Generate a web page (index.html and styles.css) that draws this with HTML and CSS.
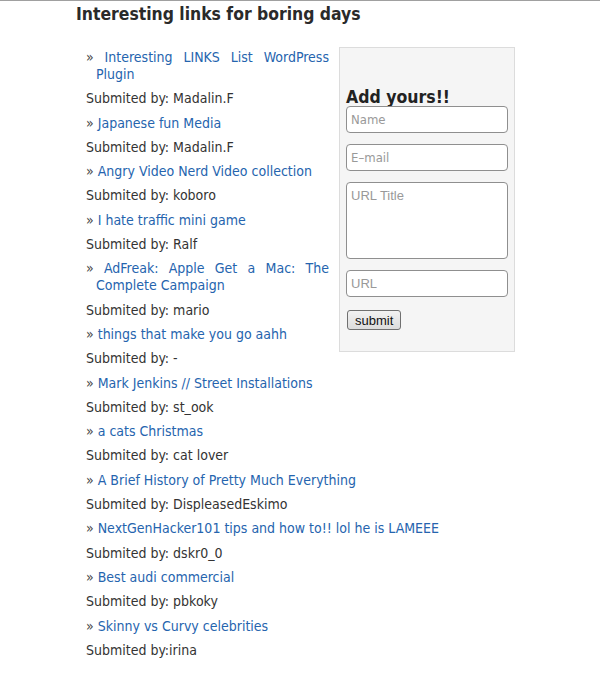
FILE: index.html
```html
<!DOCTYPE html>
<html>
<head>
<meta charset="utf-8">
<link rel="stylesheet" href="styles.css">
</head>
<body>
<div class="page">
  <h1 class="title">Interesting links for boring days</h1>
  <div class="content">
    <form class="addbox">
      <h2 class="add-title">Add yours!!</h2>
      <input class="field" type="text" placeholder="Name">
      <input class="field" type="text" placeholder="E–mail">
      <textarea class="field area" placeholder="URL Title"></textarea>
      <input class="field url" type="text" placeholder="URL">
      <button class="submit" type="button">submit</button>
    </form>
    <p class="link">» <a href="#">Interesting LINKS List WordPress Plugin</a></p>
    <p class="by">Submited by: Madalin.F</p>
    <p class="link">» <a href="#">Japanese fun Media</a></p>
    <p class="by">Submited by: Madalin.F</p>
    <p class="link">» <a href="#">Angry Video Nerd Video collection</a></p>
    <p class="by">Submited by: koboro</p>
    <p class="link">» <a href="#">I hate traffic mini game</a></p>
    <p class="by">Submited by: Ralf</p>
    <p class="link">» <a href="#">AdFreak: Apple Get a Mac: The Complete Campaign</a></p>
    <p class="by">Submited by: mario</p>
    <p class="link">» <a href="#">things that make you go aahh</a></p>
    <p class="by">Submited by: -</p>
    <p class="link">» <a href="#">Mark Jenkins // Street Installations</a></p>
    <p class="by">Submited by: st_ook</p>
    <p class="link">» <a href="#">a cats Christmas</a></p>
    <p class="by">Submited by: cat lover</p>
    <p class="link">» <a href="#">A Brief History of Pretty Much Everything</a></p>
    <p class="by">Submited by: DispleasedEskimo</p>
    <p class="link">» <a href="#">NextGenHacker101 tips and how to!! lol he is LAMEEE</a></p>
    <p class="by">Submited by: dskr0_0</p>
    <p class="link">» <a href="#">Best audi commercial</a></p>
    <p class="by">Submited by: pbkoky</p>
    <p class="link">» <a href="#">Skinny vs Curvy celebrities</a></p>
    <p class="by">Submited by:irina</p>
  </div>
</div>
</body>
</html>
```
FILE: styles.css
```css
html, body {
  margin: 0;
  padding: 0;
  background: #fff;
}
body {
  border-top: 1px solid #a0a0a0;
  font-family: "DejaVu Sans Condensed", "DejaVu Sans", sans-serif;
  color: #333;
}
.page {
  padding-left: 76px;
}
.title {
  margin: 0;
  padding-top: 2px;
  font-size: 17.4px;
  line-height: 22px;
  font-weight: bold;
  color: #2a2a2a;
}
.content {
  width: 429px;
  margin-left: 10px;
  padding-top: 24px;
  font-size: 14px;
  line-height: 17px;
}
.content p {
  margin: 0 0 7.3px;
  text-align: justify;
}
.link {
  padding-left: 10px;
  text-indent: -10px;
  color: #444;
}
.link a {
  color: #2564ae;
  text-decoration: none;
}
.by {
  color: #333;
}
.addbox {
  float: right;
  margin: -2px 0 0 10px;
  width: 162px;
  padding: 40px 6px 21px;
  background: #f5f5f5;
  border: 1px solid #dcdcdc;
  display: flex;
  flex-direction: column;
  align-items: flex-start;
}
.add-title {
  margin: 0;
  font-size: 17.5px;
  line-height: 18px;
  font-weight: bold;
  color: #222;
}
.field {
  box-sizing: border-box;
  width: 162px;
  height: 27px;
  margin: 0 0 11px;
  border: 1px solid #8f8f8f;
  border-radius: 4px;
  background: #fff;
  padding: 3px 4px;
  font-family: "DejaVu Sans Condensed", "DejaVu Sans", sans-serif;
  font-size: 13px;
  color: #333;
  outline: none;
}
.field::placeholder {
  color: #999;
}
.area {
  height: 77px;
  resize: none;
  padding: 5px 4px;
  margin-bottom: 11px;
  font-family: "Liberation Sans", Arial, sans-serif;
  font-size: 13px;
}
.url {
  font-family: "Liberation Sans", Arial, sans-serif;
  margin-bottom: 13px;
}
.submit {
  margin-left: 1px;
  height: 20px;
  padding: 0 7px;
  font-family: "Liberation Sans", Arial, sans-serif;
  font-size: 13px;
  color: #111;
  border: 1px solid #707070;
  border-radius: 3px;
  background: linear-gradient(#f2f2f2, #dcdcdc);
}
```
